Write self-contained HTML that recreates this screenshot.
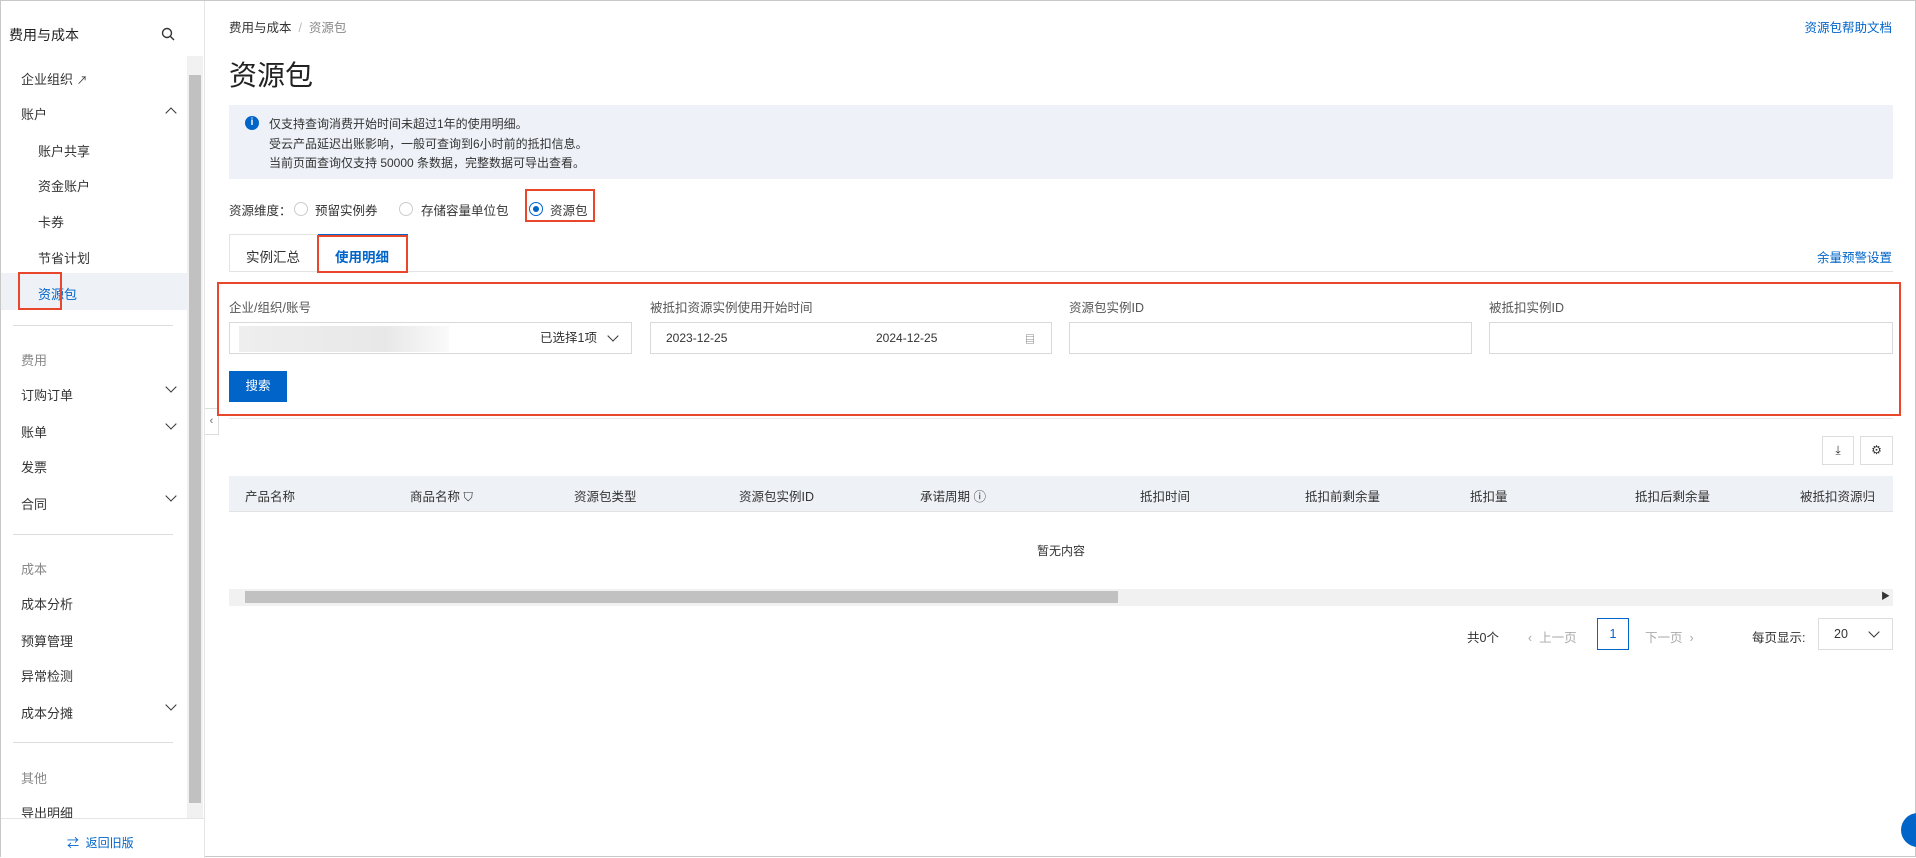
<!DOCTYPE html>
<html><head><meta charset="utf-8"><style>
*{box-sizing:border-box;margin:0;padding:0}
body{width:1916px;height:857px;overflow:hidden;background:#fff;font-family:"Liberation Sans","Noto Sans CJK SC",sans-serif;font-size:13px;color:#333;position:relative;border:1px solid #c8c8c8}
.a{position:absolute;white-space:nowrap}
.side{position:absolute;left:0;top:0;width:204px;height:857px;border-right:1px solid #e5e5e5;background:#fff}
.red{position:absolute;border:2px solid #e8472b}
.chev{position:absolute;width:8px;height:8px;border-right:1.5px solid #333;border-bottom:1.5px solid #333}
.inp{position:absolute;height:32px;border:1px solid #d9d9d9;background:#fff}
.gray{color:#888}
.hdr{position:absolute;top:475px;left:228px;width:1664px;height:36px;background:#eef1f6;border-bottom:1px solid #e3e3e3}
.hdr span{position:absolute;top:10px;font-size:12.5px;color:#333}
</style></head><body>
<div class="side">
<div class="a" style="left:8px;top:24px;font-size:14px;color:#222">费用与成本</div>
<svg class="a" style="left:160px;top:26px" width="14" height="14"><circle cx="6" cy="6" r="4.5" fill="none" stroke="#333" stroke-width="1.4"/><line x1="9.5" y1="9.5" x2="13" y2="13" stroke="#333" stroke-width="1.4"/></svg>
<div class="a" style="left:186px;top:55px;width:16px;height:762px;background:#f1f1f1"></div>
<div class="a" style="left:188px;top:74px;width:12px;height:728px;background:#c1c1c1"></div>
<div class="a" style="left:20px;top:68px">企业组织 <span style="font-size:11px">↗</span></div>
<div class="a" style="left:20px;top:103px">账户</div><div class="chev" style="left:166px;top:108px;transform:rotate(-135deg)"></div>
<div class="a" style="left:37px;top:140px">账户共享</div>
<div class="a" style="left:37px;top:175px">资金账户</div>
<div class="a" style="left:37px;top:211px">卡券</div>
<div class="a" style="left:37px;top:247px">节省计划</div>
<div class="a" style="left:0;top:272px;width:186px;height:37px;background:#eef1f6"></div>
<div class="a" style="left:37px;top:283px;color:#0064c8">资源包</div>
<div class="red" style="left:17px;top:271px;width:44px;height:38px"></div>
<div class="a" style="left:12px;top:324px;width:160px;height:1px;background:#ddd"></div>
<div class="a gray" style="left:20px;top:349px">费用</div>
<div class="a" style="left:20px;top:384px">订购订单</div><div class="chev" style="left:166px;top:382px;transform:rotate(45deg)"></div>
<div class="a" style="left:20px;top:421px">账单</div><div class="chev" style="left:166px;top:419px;transform:rotate(45deg)"></div>
<div class="a" style="left:20px;top:456px">发票</div>
<div class="a" style="left:20px;top:493px">合同</div><div class="chev" style="left:166px;top:491px;transform:rotate(45deg)"></div>
<div class="a" style="left:12px;top:533px;width:160px;height:1px;background:#ddd"></div>
<div class="a gray" style="left:20px;top:558px">成本</div>
<div class="a" style="left:20px;top:593px">成本分析</div>
<div class="a" style="left:20px;top:630px">预算管理</div>
<div class="a" style="left:20px;top:665px">异常检测</div>
<div class="a" style="left:20px;top:702px">成本分摊</div><div class="chev" style="left:166px;top:700px;transform:rotate(45deg)"></div>
<div class="a" style="left:12px;top:741px;width:160px;height:1px;background:#ddd"></div>
<div class="a gray" style="left:20px;top:767px">其他</div>
<div class="a" style="left:20px;top:802px">导出明细</div>
<div class="a" style="left:0;top:817px;width:203px;height:40px;border-top:1px solid #e5e5e5;background:#fff"></div>
<div class="a" style="left:66px;top:833px;color:#0064c8;font-size:12px">⇄ &nbsp;返回旧版</div>
</div>
<div class="a" style="left:204px;top:407px;width:14px;height:27px;border:1px solid #ddd;border-left:none;background:#fff;font-size:11px;color:#666;text-align:center;line-height:25px">‹</div>

<div class="a" style="left:228px;top:16px;font-size:12.5px">费用与成本 <span style="color:#bbb">&nbsp;/&nbsp;</span> <span class="gray">资源包</span></div>
<div class="a" style="right:23px;top:16px;font-size:12.5px;color:#0064c8">资源包帮助文档</div>
<div class="a" style="left:228px;top:53px;font-size:28px;color:#222">资源包</div>
<div class="a" style="left:228px;top:104px;width:1664px;height:74px;background:#eef2f8"></div>
<div class="a" style="left:244px;top:115px;width:14px;height:14px;border-radius:50%;background:#0064c8;color:#fff;font-size:10px;font-weight:bold;text-align:center;line-height:14px">i</div>
<div class="a" style="left:268px;top:114px;font-size:12px;line-height:19.5px">仅支持查询消费开始时间未超过1年的使用明细。<br>受云产品延迟出账影响，一般可查询到6小时前的抵扣信息。<br>当前页面查询仅支持 50000 条数据，完整数据可导出查看。</div>
<div class="a" style="left:228px;top:199px;font-size:12.5px">资源维度：</div>
<div class="a" style="left:293px;top:201px;width:14px;height:14px;border:1px solid #ccc;border-radius:50%"></div>
<div class="a" style="left:314px;top:199px;font-size:12.5px">预留实例券</div>
<div class="a" style="left:398px;top:201px;width:14px;height:14px;border:1px solid #ccc;border-radius:50%"></div>
<div class="a" style="left:420px;top:199px;font-size:12.5px">存储容量单位包</div>
<div class="a" style="left:528px;top:201px;width:14px;height:14px;border:1px solid #0064c8;border-radius:50%"><div style="margin:3px;width:6px;height:6px;border-radius:50%;background:#0064c8"></div></div>
<div class="a" style="left:549px;top:199px;font-size:12.5px">资源包</div>
<div class="red" style="left:524px;top:188px;width:70px;height:33px"></div>

<div class="a" style="left:228px;top:270px;width:1664px;height:1px;background:#e3e3e3"></div>
<div class="a" style="left:228px;top:233px;width:89px;height:38px;border:1px solid #e3e3e3;border-bottom:none"></div>
<div class="a" style="left:245px;top:245px;font-size:13.5px">实例汇总</div>
<div class="a" style="left:317px;top:233px;width:90px;height:38px;background:#fff;border-top:2px solid #0064c8"></div>
<div class="a" style="left:334px;top:245px;font-size:13.5px;color:#0064c8;font-weight:bold">使用明细</div>
<div class="red" style="left:316px;top:234px;width:91px;height:38px"></div>
<div class="a" style="right:23px;top:246px;font-size:12.5px;color:#0064c8">余量预警设置</div>

<div class="red" style="left:216px;top:281px;width:1684px;height:134px"></div>
<div class="a" style="left:228px;top:296px;font-size:12.5px;color:#555">企业/组织/账号</div>
<div class="a" style="left:649px;top:296px;font-size:12.5px;color:#555">被抵扣资源实例使用开始时间</div>
<div class="a" style="left:1068px;top:296px;font-size:12.5px;color:#555">资源包实例ID</div>
<div class="a" style="left:1488px;top:296px;font-size:12.5px;color:#555">被抵扣实例ID</div>
<div class="inp" style="left:228px;top:321px;width:403px"><div style="position:absolute;left:9px;top:3px;width:210px;height:26px;background:linear-gradient(90deg,#eee,#e8e8e8 70%,#fafafa)"></div><span style="position:absolute;right:34px;top:6px;font-size:12.5px;line-height:18px">已选择1项</span><div class="chev" style="right:14px;top:9px;transform:rotate(45deg)"></div></div>
<div class="inp" style="left:649px;top:321px;width:402px"><span style="position:absolute;left:15px;top:8px;font-size:12px">2023-12-25</span><span style="position:absolute;left:225px;top:8px;font-size:12px">2024-12-25</span><span style="position:absolute;right:16px;top:8px;font-size:10px;color:#666">▤</span></div>
<div class="inp" style="left:1068px;top:321px;width:403px"></div>
<div class="inp" style="left:1488px;top:321px;width:404px"></div>
<div class="a" style="left:228px;top:370px;width:58px;height:31px;background:#0064c8;color:#fff;font-size:12.5px;text-align:center;line-height:31px">搜索</div>
<div class="a" style="left:228px;top:417px;width:1664px;height:1px;background:#e8e8e8"></div>

<div class="a" style="left:1821px;top:435px;width:32px;height:29px;border:1px solid #ddd;text-align:center;line-height:27px;font-size:12px">⤓</div>
<div class="a" style="left:1859px;top:435px;width:33px;height:29px;border:1px solid #ddd;text-align:center;line-height:27px;font-size:12px">⚙</div>
<div class="hdr"><span style="left:16px">产品名称</span><span style="left:181px">商品名称 ⛉</span><span style="left:345px">资源包类型</span><span style="left:510px">资源包实例ID</span><span style="left:691px">承诺周期 ⓘ</span><span style="left:911px">抵扣时间</span><span style="left:1076px">抵扣前剩余量</span><span style="left:1241px">抵扣量</span><span style="left:1406px">抵扣后剩余量</span><span style="left:1571px">被抵扣资源归</span></div>
<div class="a" style="left:1036px;top:541px;font-size:12px">暂无内容</div>
<div class="a" style="left:228px;top:588px;width:1664px;height:17px;background:#f1f1f1"></div>
<div class="a" style="left:244px;top:590px;width:873px;height:12px;background:#c1c1c1"></div>
<div class="a" style="left:1880px;top:588px;font-size:9px">▶</div>
<div class="a" style="left:1466px;top:626px;font-size:12.5px">共0个</div>
<div class="a" style="left:1527px;top:626px;font-size:12.5px;color:#aaa">‹ &nbsp;上一页</div>
<div class="a" style="left:1596px;top:617px;width:32px;height:32px;border:1px solid #0064c8;color:#0064c8;text-align:center;line-height:30px;font-size:12.5px">1</div>
<div class="a" style="left:1644px;top:626px;font-size:12.5px;color:#aaa">下一页 &nbsp;›</div>
<div class="a" style="left:1751px;top:626px;font-size:12.5px">每页显示:</div>
<div class="a" style="left:1817px;top:617px;width:75px;height:32px;border:1px solid #ddd"><span style="position:absolute;left:15px;top:8px;font-size:12.5px">20</span><div class="chev" style="right:14px;top:9px;transform:rotate(45deg)"></div></div>
<div class="a" style="left:1900px;top:812px;width:34px;height:34px;border-radius:50%;background:#0064c8"></div>
</body></html>
